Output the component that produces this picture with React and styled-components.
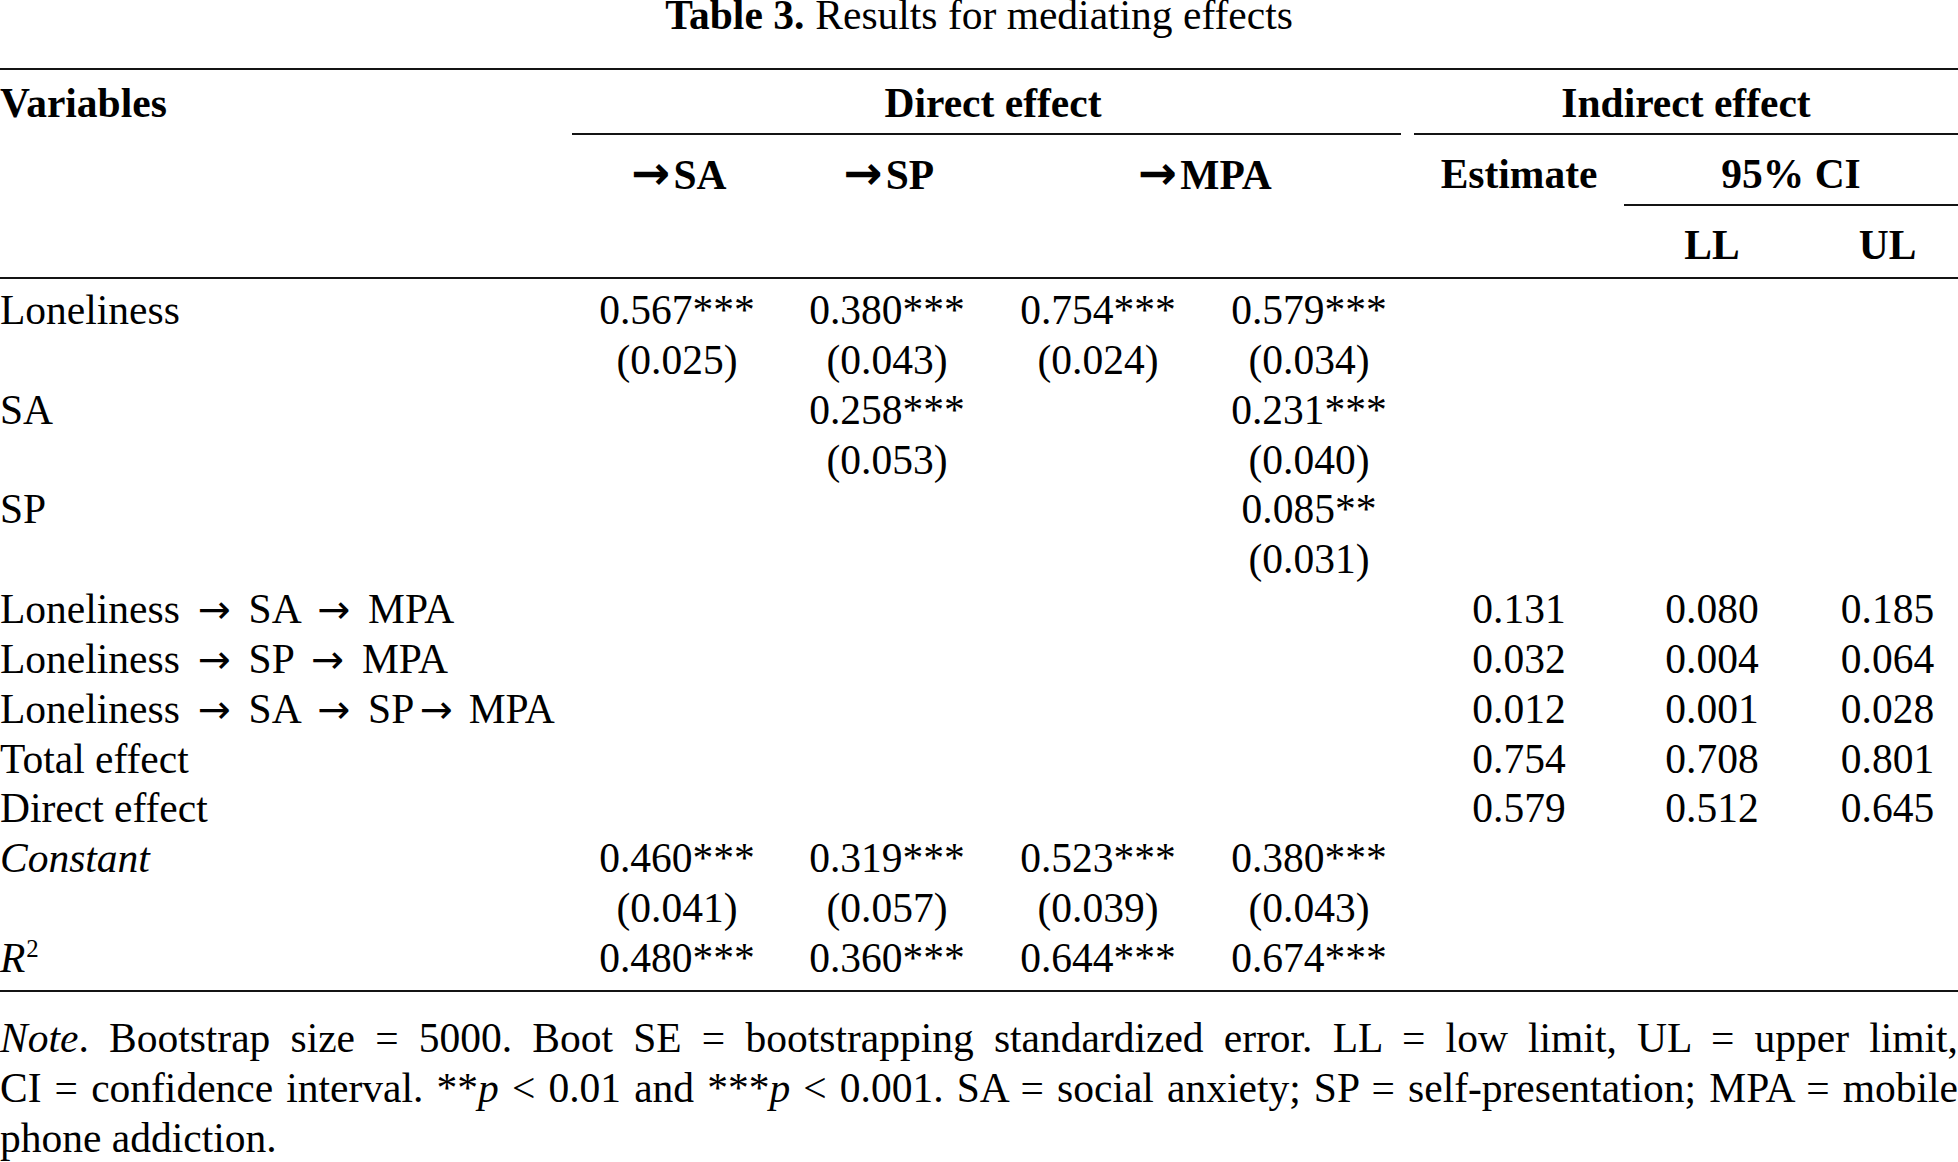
import React from "react";
import styled, { createGlobalStyle } from "styled-components";

// column widths measured from the reference (page is 1958px wide)
const COLS = "572px 210px 210px 212px 210px 210px 176px 158px";

const GlobalStyle = createGlobalStyle`
    html, body {
        margin: 0;
        padding: 0;
        background: #fff;
    }
    body {
        font-family: "Liberation Serif", "Times New Roman", "DejaVu Serif", serif;
        font-size: 41.5px;
        line-height: 49.85px;
        color: #000;
    }
`;

const Page = styled.div`
    width: 1958px;
`;

const Caption = styled.div`
    text-align: center;
    line-height: 30px;
    margin-bottom: 38px;
`;
const CaptionLabel = styled.b`
    margin-right: 11px;
`;

const Rule = styled.div`
    height: 2px;
    background: #141414;
    margin-top: ${(p) => p.$gap || 0}px;
    margin-right: ${(p) => p.$trim || 0}px;
`;

const HeadBlock = styled.div`
    padding-top: 9px;
    font-weight: 700;
`;
const HeadRow = styled.div`
    display: grid;
    grid-template-columns: ${COLS};
    height: ${(p) => p.$h}px;
`;

const Cell = styled.div`
    grid-column: span ${(p) => p.$span || 1};
    text-align: ${(p) => p.$align || "center"};
    padding-left: ${(p) => p.$pad || 0}px;
    white-space: nowrap;
`;
const GroupCell = styled.div`
    grid-column: span ${(p) => p.$span || 1};
    display: flex;
    flex-direction: column;
    align-items: stretch;
    text-align: center;
    white-space: nowrap;
`;

// math-style arrow: a fixed advance with the glyph centred in it
const Arrow = styled.span`
    display: inline-block;
    width: ${(p) => p.$w || 48}px;
    text-align: center;
    font-family: "DejaVu Sans", sans-serif;
    font-size: ${(p) => p.$size || 0.95}em;
    line-height: 1;
`;

const Body = styled.div`
    padding: 7px 0 6px;
`;
const DataRow = styled.div`
    display: grid;
    grid-template-columns: ${COLS};
`;

const Sup = styled.span`
    font-size: 0.6em;
    line-height: 0;
    vertical-align: 0.62em;
    margin-left: 1px;
`;

const Note = styled.div`
    margin-top: 22px;
`;
const NoteLine = styled.div`
    text-align: justify;
    text-align-last: ${(p) => (p.$last ? "left" : "justify")};
`;

const HeadArrow = () => (
    <Arrow $w={46} $size={1.12}>
        →
    </Arrow>
);

const rows = [
    {
        label: "Loneliness",
        direct: [
            ["0.567***", "(0.025)"],
            ["0.380***", "(0.043)"],
            ["0.754***", "(0.024)"],
            ["0.579***", "(0.034)"],
        ],
    },
    {
        label: "SA",
        direct: [null, ["0.258***", "(0.053)"], null, ["0.231***", "(0.040)"]],
    },
    {
        label: "SP",
        direct: [null, null, null, ["0.085**", "(0.031)"]],
    },
    {
        label: (
            <>
                Loneliness <Arrow>→</Arrow> SA <Arrow>→</Arrow> MPA
            </>
        ),
        indirect: ["0.131", "0.080", "0.185"],
    },
    {
        label: (
            <>
                Loneliness <Arrow>→</Arrow> SP <Arrow>→</Arrow> MPA
            </>
        ),
        indirect: ["0.032", "0.004", "0.064"],
    },
    {
        label: (
            <>
                Loneliness <Arrow>→</Arrow> SA <Arrow>→</Arrow> SP
                <Arrow $w={44}>→</Arrow> MPA
            </>
        ),
        indirect: ["0.012", "0.001", "0.028"],
    },
    { label: "Total effect", indirect: ["0.754", "0.708", "0.801"] },
    { label: "Direct effect", indirect: ["0.579", "0.512", "0.645"] },
    {
        label: <i>Constant</i>,
        direct: [
            ["0.460***", "(0.041)"],
            ["0.319***", "(0.057)"],
            ["0.523***", "(0.039)"],
            ["0.380***", "(0.043)"],
        ],
    },
    {
        label: (
            <>
                <i>R</i>
                <Sup>2</Sup>
            </>
        ),
        direct: [["0.480***"], ["0.360***"], ["0.644***"], ["0.674***"]],
    },
];

function App() {
    return (
        <Page>
            <GlobalStyle />
            <Caption>
                <CaptionLabel>Table 3.</CaptionLabel>Results for mediating effects
            </Caption>
            <Rule />

            <HeadBlock>
                <HeadRow $h={71}>
                    <Cell $align="left">Variables</Cell>
                    <GroupCell $span={4}>
                        <span>Direct effect</span>
                        <Rule $trim={13} $gap={4} />
                    </GroupCell>
                    <GroupCell $span={3}>
                        <span>Indirect effect</span>
                        <Rule $gap={4} />
                    </GroupCell>
                </HeadRow>
                <HeadRow $h={71}>
                    <Cell />
                    <Cell>
                        <HeadArrow />
                        SA
                    </Cell>
                    <Cell>
                        <HeadArrow />
                        SP
                    </Cell>
                    <Cell $span={2}>
                        <HeadArrow />
                        MPA
                    </Cell>
                    <Cell>Estimate</Cell>
                    <GroupCell $span={2}>
                        <span>95% CI</span>
                        <Rule $gap={4} />
                    </GroupCell>
                </HeadRow>
                <HeadRow $h={56}>
                    <Cell $span={6} />
                    <Cell>LL</Cell>
                    <Cell $pad={17}>UL</Cell>
                </HeadRow>
            </HeadBlock>
            <Rule />

            <Body>
                {rows.map((r, i) => (
                    <DataRow key={i}>
                        <Cell $align="left">{r.label}</Cell>
                        {[0, 1, 2, 3].map((c) => (
                            <Cell key={"d" + c}>
                                {r.direct &&
                                    r.direct[c] &&
                                    r.direct[c].map((v, k) => <div key={k}>{v}</div>)}
                            </Cell>
                        ))}
                        {[0, 1, 2].map((c) => (
                            <Cell key={"i" + c} $pad={c === 2 ? 17 : 0}>
                                {r.indirect && r.indirect[c]}
                            </Cell>
                        ))}
                    </DataRow>
                ))}
            </Body>
            <Rule />

            <Note>
                <NoteLine>
                    <i>Note</i>. Bootstrap size = 5000. Boot SE = bootstrapping standardized
                    error. LL = low limit, UL = upper limit,
                </NoteLine>
                <NoteLine>
                    CI = confidence interval. **<i>p</i> &lt; 0.01 and ***<i>p</i> &lt; 0.001. SA
                    = social anxiety; SP = self-presentation; MPA = mobile
                </NoteLine>
                <NoteLine $last>phone addiction.</NoteLine>
            </Note>
        </Page>
    );
}

export default App;
